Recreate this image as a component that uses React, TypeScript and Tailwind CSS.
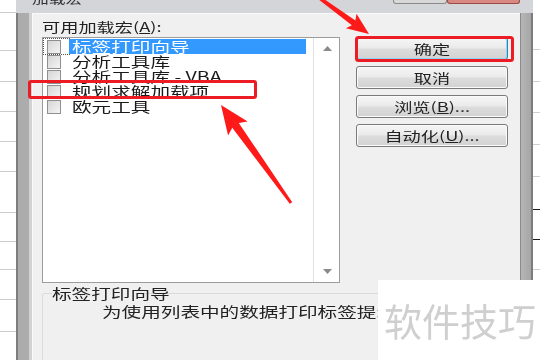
import type { ReactNode } from "react";

const items = ["标签打印向导", "分析工具库", "分析工具库 - VBA", "规划求解加载项", "欧元工具"];

// spreadsheet gridlines peeking out on both sides of the dialog
const leftRows = [13, 38, 31, 30, 30, 30, 41, 29, 28, 30, 32, 40];
const rightRows = [
  { h: 50, dark: false },
  { h: 32, dark: false },
  { h: 31, dark: false },
  { h: 32, dark: false },
  { h: 32, dark: false },
  { h: 33, dark: true },
  { h: 30, dark: true },
  { h: 30, dark: false },
  { h: 90, dark: false },
];

function arrow(
  x1: number,
  y1: number,
  x2: number,
  y2: number,
  o: { tail: number; neck: number; head: number; len: number; barb: number }
) {
  const L = Math.hypot(x2 - x1, y2 - y1);
  const ux = (x2 - x1) / L;
  const uy = (y2 - y1) / L;
  const p = (d: number, w: number) => `${x1 + ux * d - uy * w},${y1 + uy * d + ux * w}`;
  const base = L - o.len;
  const barb = base - o.barb;
  return [p(0, o.tail), p(base, o.neck), p(barb, o.head), p(L, 0), p(barb, -o.head), p(base, -o.neck), p(0, -o.tail)].join(" ");
}

function Wide({ children, className = "" }: { children: ReactNode; className?: string }) {
  return <span className={`inline-block whitespace-nowrap scale-x-140 ${className}`}>{children}</span>;
}

function Checkbox() {
  return (
    <span className="h-[14px] w-[14px] shrink-0 border border-[#8f8f8f] bg-[linear-gradient(135deg,#d6d6d6,#f4f4f4)]" />
  );
}

function DialogButton({ children, focused = false }: { children: ReactNode; focused?: boolean }) {
  return (
    <div
      className={`flex h-[23px] w-[152px] items-center justify-center rounded-[3px] border bg-[linear-gradient(#f6f6f6,#ebebeb_45%,#dcdcdc_55%,#d2d2d2)] text-[13px] leading-none text-[#222] ${
        focused ? "border-[#3a80b8] shadow-[inset_0_0_0_1px_#8fd6f4]" : "border-[#7a7a7a] shadow-[inset_0_0_0_1px_#fbfbfb]"
      }`}
    >
      <Wide className="origin-center">{children}</Wide>
    </div>
  );
}

export default function App() {
  return (
    <div className="relative flex h-[360px] w-[540px] overflow-hidden bg-white font-['Noto_Sans_CJK_SC',sans-serif] text-[#1e1e1e] blur-[0.4px]">
      {/* sheet on the left */}
      <div className="flex w-[16px] shrink-0 flex-col">
        {leftRows.map((h, i) => (
          <div key={i} className="shrink-0 border-b border-[#cdcdcd]" style={{ height: h }} />
        ))}
        <div className="-mt-[8px] h-[8px] w-[5px] bg-[#6f8fc0]" />
      </div>

      {/* dialog window */}
      <div className="flex w-[517px] shrink-0 flex-col">
        <div className="flex h-[13px] shrink-0 items-end overflow-hidden bg-[#d3d5d8]">
          <div className="mb-[7px] ml-[16px] h-[14px] text-[12px] leading-[14px] text-[#333]">
            <Wide className="origin-left">加载宏</Wide>
          </div>
          <div className="mb-auto ml-auto mr-[13px] flex">
            <div className="h-[4px] w-[54px] rounded-b-[3px] border border-t-0 border-[#8a8a8a] bg-[#d8d8d8]" />
            <div className="h-[4px] w-[73px] rounded-b-[3px] border border-t-0 border-[#9a4a44] bg-[#d88a82]" />
          </div>
        </div>

        <div className="flex flex-1">
          <div className="w-[16px] shrink-0 border-l-2 border-r-[3px] border-l-[#7e7e7e] border-r-[#d2d2d2] bg-[#acacac]" />

          <div className="flex w-[488px] flex-col border-l border-t border-[#fafafa] bg-[#f0f0f0] pl-[9px] pt-[6px]">
            <div className="flex">
              <div className="flex w-[298px] flex-col">
                <div className="h-[17px] text-[13px] leading-[13px] text-[#222]">
                  <Wide className="origin-left">
                    可用加载宏(<u>A</u>):
                  </Wide>
                </div>
                <div className="flex h-[246px] border border-[#9c9c9c] bg-white">
                  <div className="flex flex-1 flex-col pt-[1px]">
                    {items.map((item, i) => (
                      <div key={item} className="flex h-[15px] items-center">
                        <div
                          className={`ml-[1px] flex h-[15px] items-center pl-[3px] pr-[8px] ${
                            i === 0 ? "outline outline-1 outline-dotted outline-[#555]" : ""
                          }`}
                        >
                          <Checkbox />
                        </div>
                        <div
                          className={`flex h-[15px] w-[237px] items-center pl-[3px] text-[14px] leading-[15px] ${
                            i === 0 ? "bg-[#3399ff] text-white" : "text-[#1a1a1a]"
                          }`}
                        >
                          <Wide className="origin-left">{item}</Wide>
                        </div>
                      </div>
                    ))}
                  </div>
                  <div className="flex w-[26px] flex-col items-center justify-between border-l border-[#e2e2e2] py-[8px] pl-[2px]">
                    <svg width="9" height="5" viewBox="0 0 9 5">
                      <path d="M0 5 L4.5 0 L9 5 Z" fill="#8a8a8a" />
                    </svg>
                    <svg width="9" height="5" viewBox="0 0 9 5">
                      <path d="M0 0 L4.5 5 L9 0 Z" fill="#8a8a8a" />
                    </svg>
                  </div>
                </div>
              </div>

              <div className="ml-[16px] flex flex-col gap-[6px] pt-[17px]">
                <DialogButton focused>确定</DialogButton>
                <DialogButton>取消</DialogButton>
                <DialogButton>
                  浏览(<u>B</u>)...
                </DialogButton>
                <DialogButton>
                  自动化(<u>U</u>)...
                </DialogButton>
              </div>
            </div>

            <fieldset className="mt-[2px] h-[80px] rounded-[2px] border border-[#dadada] pl-[9px] pt-[2px]">
              <legend className="pr-[4px] text-[14px] leading-[16px] text-[#222]">
                <Wide className="origin-left">标签打印向导</Wide>
              </legend>
              <div className="pl-[50px] text-[14px] leading-[16px] text-[#222]">
                <Wide className="origin-left">为使用列表中的数据打印标签提示</Wide>
              </div>
            </fieldset>
          </div>

          <div className="w-[13px] shrink-0 border-l border-r-2 border-l-[#8a8a8a] border-r-[#7c7c7c] bg-[linear-gradient(to_right,#b6b6b6,#a6a6a6)]" />
        </div>
      </div>

      {/* sheet on the right */}
      <div className="flex w-[7px] shrink-0 flex-col">
        {rightRows.map((r, i) => (
          <div
            key={i}
            className={`shrink-0 border-b ${r.dark ? "border-[#1a1a1a]" : "border-[#d0d0d0]"}`}
            style={{ height: r.h }}
          />
        ))}
      </div>

      {/* red annotations */}
      <svg className="pointer-events-none absolute inset-0" width="540" height="360" viewBox="0 0 540 360">
        <rect x="29.5" y="81.5" width="226" height="16" rx="1.5" fill="none" stroke="#ec1c24" strokeWidth="3" />
        <rect x="356.5" y="37.5" width="156" height="23" rx="2" fill="none" stroke="#ec1c24" strokeWidth="3" />
        <polygon
          points={arrow(314, -6, 369, 34, { tail: 1.5, neck: 3, head: 9, len: 19, barb: 3 })}
          fill="#ff1a1a"
        />
        <polygon
          points={arrow(291, 203, 221, 105, { tail: 1.5, neck: 4, head: 12, len: 25, barb: 4 })}
          fill="#ff1a1a"
        />
      </svg>

      {/* watermark */}
      <div className="absolute bottom-0 right-0 flex h-[80px] w-[162px] items-center bg-white pl-[6px] text-[38px] leading-none text-[#cfcfcf]">
        软件技巧
      </div>
    </div>
  );
}
